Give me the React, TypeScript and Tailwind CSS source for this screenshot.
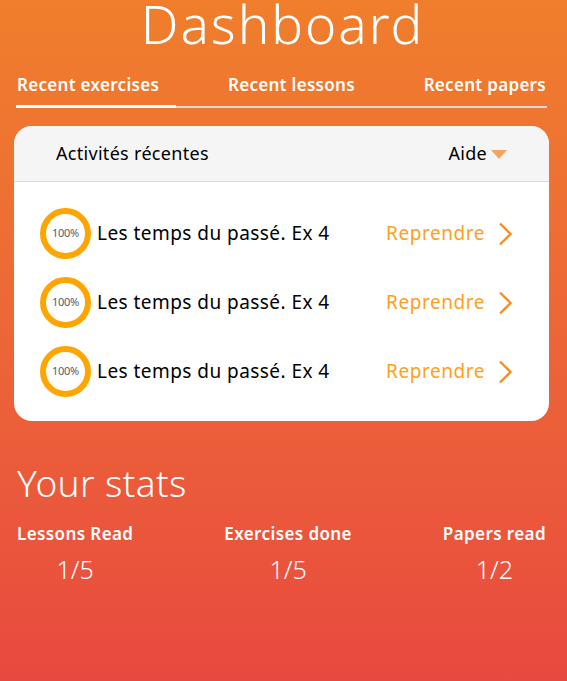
import React from "react";

function Ring() {
  return (
    <div className="relative w-[51px] h-[51px] shrink-0">
      <svg width="51" height="51" viewBox="0 0 51 51" className="absolute inset-0">
        <circle cx="25.5" cy="25.5" r="22.5" fill="white" stroke="#ffa500" strokeWidth="6" />
      </svg>
      <div className="absolute inset-0 flex items-center justify-center text-[11px] text-[#555c66] tracking-[-0.3px]">
        100%
      </div>
    </div>
  );
}

function Row() {
  return (
    <div className="flex items-center h-[69px] pl-[26px] pr-[36px]">
      <Ring />
      <div className="ml-[6px] text-[19px] tracking-[0.45px] text-black flex-1">Les temps du passé. Ex 4</div>
      <div className="text-[19px] tracking-[0.55px] text-[#ffa01c]">Reprendre</div>
      <svg width="16" height="24" viewBox="0 0 16 24" className="ml-[12px]">
        <path d="M3 1.5 L13.5 12 L3 22.5" fill="none" stroke="#ff8a1c" strokeWidth="2.3" />
      </svg>
    </div>
  );
}

export default function App() {
  return (
    <div
      className="w-[567px] h-[681px] bg-linear-to-b from-[#f07e2b] to-[#e8493f] text-white pl-[16px] pr-[20px] overflow-hidden"
      style={{ fontFamily: '"Noto Sans", sans-serif' }}
    >
      <h1 className="text-center text-[53px] font-light leading-[48px] tracking-[2px] pl-[2px]">Dashboard</h1>
      <div className="mt-[26px] flex justify-between text-[17px] leading-[22px] font-semibold tracking-[0.3px] px-[1px]">
        <span>Recent exercises</span>
        <span>Recent lessons</span>
        <span>Recent papers</span>
      </div>
      <div className="relative mt-[9px] h-[3px]">
        <div className="absolute left-0 right-0 top-[1px] h-[2px] bg-[#d9d9d9]" />
        <div className="absolute left-0 top-0 w-[160px] h-[3px] bg-white" />
      </div>
      <div className="mt-[18px] mx-[-2px] bg-white rounded-[18px] overflow-hidden text-black">
        <div className="h-[56px] bg-[#f5f5f5] border-b border-[#dcdcdc] flex items-center pl-[42px] pr-[42px] justify-between text-[18px] tracking-[0.3px]">
          <span>Activités récentes</span>
          <span className="flex items-center">
            Aide
            <svg width="16" height="9" viewBox="0 0 16 9" className="ml-[4px] mt-[2px]">
              <path d="M0 0 L16 0 L8 9 Z" fill="#f4a460" />
            </svg>
          </span>
        </div>
        <div className="pt-[17px] pb-[15px]">
          <Row />
          <Row />
          <Row />
        </div>
      </div>
      <div className="mt-[40px] text-[37px] font-light leading-[44px] tracking-[0.4px] px-[1px]">Your stats</div>
      <div className="mt-[18px] flex justify-between px-[1px]">
        <div className="flex flex-col items-center">
          <span className="text-[17px] leading-[22px] font-semibold tracking-[0.4px]">Lessons Read</span>
          <span className="text-[25px] leading-[30px] font-light mt-[9px]">1/5</span>
        </div>
        <div className="flex flex-col items-center">
          <span className="text-[17px] leading-[22px] font-semibold tracking-[0.4px]">Exercises done</span>
          <span className="text-[25px] leading-[30px] font-light mt-[9px]">1/5</span>
        </div>
        <div className="flex flex-col items-center">
          <span className="text-[17px] leading-[22px] font-semibold tracking-[0.4px]">Papers read</span>
          <span className="text-[25px] leading-[30px] font-light mt-[9px]">1/2</span>
        </div>
      </div>
    </div>
  );
}
